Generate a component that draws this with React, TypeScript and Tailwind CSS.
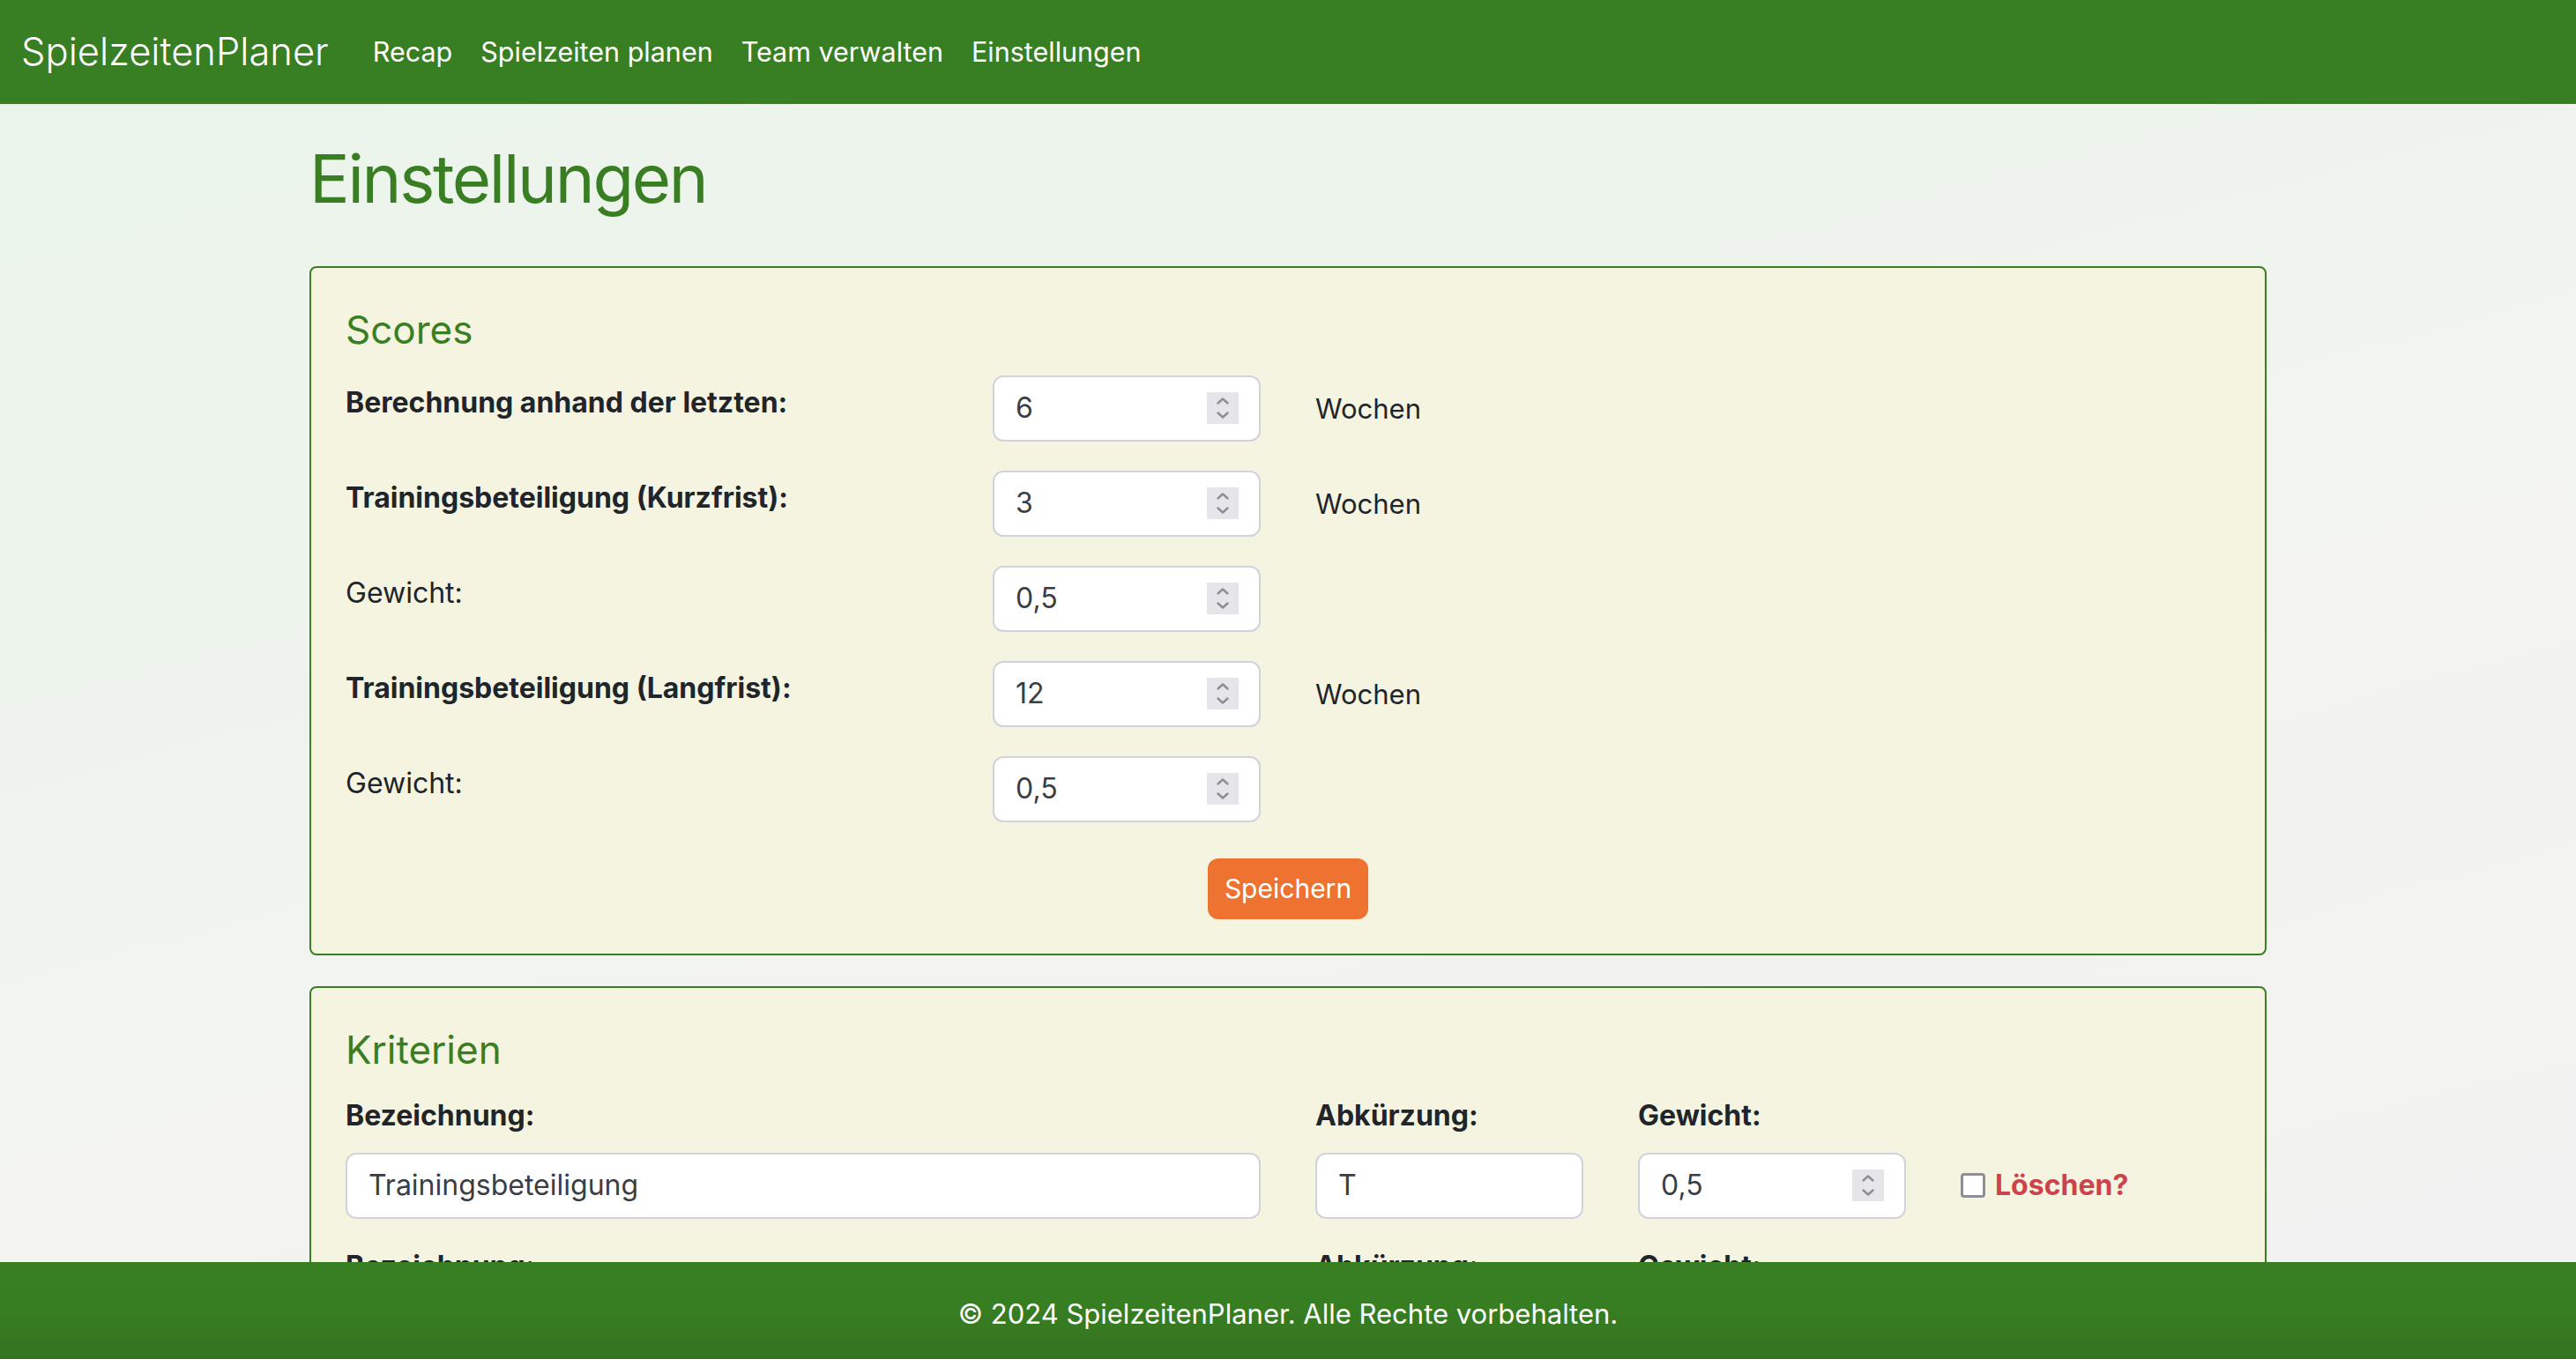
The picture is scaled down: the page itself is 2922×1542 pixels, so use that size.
import React from 'react';

const navLinks = ['Recap', 'Spielzeiten planen', 'Team verwalten', 'Einstellungen'];

const scoreRows = [
    { label: 'Berechnung anhand der letzten:', value: '6', bold: true, unit: 'Wochen' },
    { label: 'Trainingsbeteiligung (Kurzfrist):', value: '3', bold: true, unit: 'Wochen' },
    { label: 'Gewicht:', value: '0,5', bold: false, unit: '' },
    { label: 'Trainingsbeteiligung (Langfrist):', value: '12', bold: true, unit: 'Wochen' },
    { label: 'Gewicht:', value: '0,5', bold: false, unit: '' },
];

const criteria = [
    { name: 'Trainingsbeteiligung', short: 'T', weight: '0,5' },
    { name: 'Spielverständnis', short: 'S', weight: '0,5' },
];

const Spinner: React.FC = () => (
    <div className="w-[36px] h-[36px] bg-[#e6e6ea] shrink-0">
        <svg width="36" height="36" viewBox="0 0 36 36" fill="none">
            <path d="M12.5 12.5 L18 7.5 L23.5 12.5" stroke="#8d8d95" strokeWidth="2.4" strokeLinecap="round" strokeLinejoin="round" />
            <path d="M12.5 23.5 L18 28.5 L23.5 23.5" stroke="#8d8d95" strokeWidth="2.4" strokeLinecap="round" strokeLinejoin="round" />
        </svg>
    </div>
);

interface FieldProps {
    value: string;
    width: string;
    number?: boolean;
}

const Field: React.FC<FieldProps> = ({ value, width, number }) => (
    <div className={`${width} h-[75px] shrink-0 flex items-center bg-white border-2 border-[#d0d3d9] rounded-[12px] pl-[24px] pr-[23px]`}>
        <input
            type="text"
            defaultValue={value}
            className="flex-1 min-w-0 bg-transparent outline-none text-[32px] text-[#3a3e44]"
        />
        {number && <Spinner />}
    </div>
);

const Card: React.FC<{ title: string; children: React.ReactNode }> = ({ title, children }) => (
    <section className="border-2 border-[#3a7d23] rounded-[8px] bg-[#f5f4e0] px-[39px] pt-[44px] pb-[39px]">
        <h2 className="text-[44px] leading-[1.2] text-[#3a7e24] font-normal">{title}</h2>
        {children}
    </section>
);

export default function App() {
    return (
        <div className="w-full h-[1542px] flex flex-col overflow-hidden font-['Inter','Noto_Sans',sans-serif] text-[#212529]">
            <nav className="h-[118px] shrink-0 bg-[#387e22] flex items-center pl-[24px]">
                <span className="text-[43.5px] font-light text-white mr-[34px] leading-none">SpielzeitenPlaner</span>
                <ul className="flex items-center">
                    {navLinks.map(link => (
                        <li key={link} className="px-[16px] text-[30.5px] text-white leading-none">{link}</li>
                    ))}
                </ul>
            </nav>

            <main className="flex-1 min-h-0 overflow-hidden bg-[linear-gradient(165deg,#ebf4ea_0%,#eef4ed_35%,#f2f4f1_55%,#f2f2f2_100%)]">
                <div className="w-[2220px] mx-auto pt-[39px]">
                    <h1 className="text-[76px] leading-[1.2] tracking-[-0.03em] text-[#3a7e24] font-normal mb-[54px]">Einstellungen</h1>

                    <Card title="Scores">
                        <div className="mt-[25px] flex flex-col gap-[33px]">
                            {scoreRows.map((row, i) => (
                                <div key={i} className="flex items-start">
                                    <label className={`w-[734px] shrink-0 text-[32px] leading-[1.5] pt-[7px] ${row.bold ? 'font-bold' : 'font-normal'}`}>
                                        {row.label}
                                    </label>
                                    <Field value={row.value} width="w-[304px]" number />
                                    {row.unit && (
                                        <span className="ml-[62px] text-[31px] leading-[75px]">{row.unit}</span>
                                    )}
                                </div>
                            ))}
                        </div>
                        <div className="flex justify-center mt-[41px]">
                            <button className="w-[182px] h-[69px] rounded-[12px] bg-[#ee7230] text-white text-[30px]">
                                Speichern
                            </button>
                        </div>
                    </Card>

                    <div className="mt-[35px]">
                        <Card title="Kriterien">
                            <div className="mt-[24px] flex flex-col gap-[30px]">
                                {criteria.map((c, i) => (
                                    <div key={i} className="flex flex-col gap-[18px]">
                                        <div className="flex text-[32px] leading-[1.5] font-bold">
                                            <span className="w-[1038px] shrink-0">Bezeichnung:</span>
                                            <span className="ml-[62px] w-[304px] shrink-0">Abkürzung:</span>
                                            <span className="ml-[62px] w-[304px] shrink-0">Gewicht:</span>
                                        </div>
                                        <div className="flex items-center">
                                            <Field value={c.name} width="w-[1038px]" />
                                            <div className="ml-[62px]">
                                                <Field value={c.short} width="w-[304px]" />
                                            </div>
                                            <div className="ml-[62px]">
                                                <Field value={c.weight} width="w-[304px]" number />
                                            </div>
                                            <label className="ml-[62px] flex items-center gap-[11px]">
                                                <span className="w-[28px] h-[28px] rounded-[4px] border-[3px] border-[#8e8e96] bg-white" />
                                                <span className="text-[32px] font-bold text-[#cd434d]">Löschen?</span>
                                            </label>
                                        </div>
                                    </div>
                                ))}
                            </div>
                        </Card>
                    </div>
                </div>
            </main>

            <footer className="h-[110px] shrink-0 bg-[linear-gradient(180deg,#387f23_0%,#377d22_50%,#33731f_100%)] flex items-center justify-center pt-[8px]">
                <p className="text-[31px] text-white">© 2024 SpielzeitenPlaner. Alle Rechte vorbehalten.</p>
            </footer>
        </div>
    );
}
